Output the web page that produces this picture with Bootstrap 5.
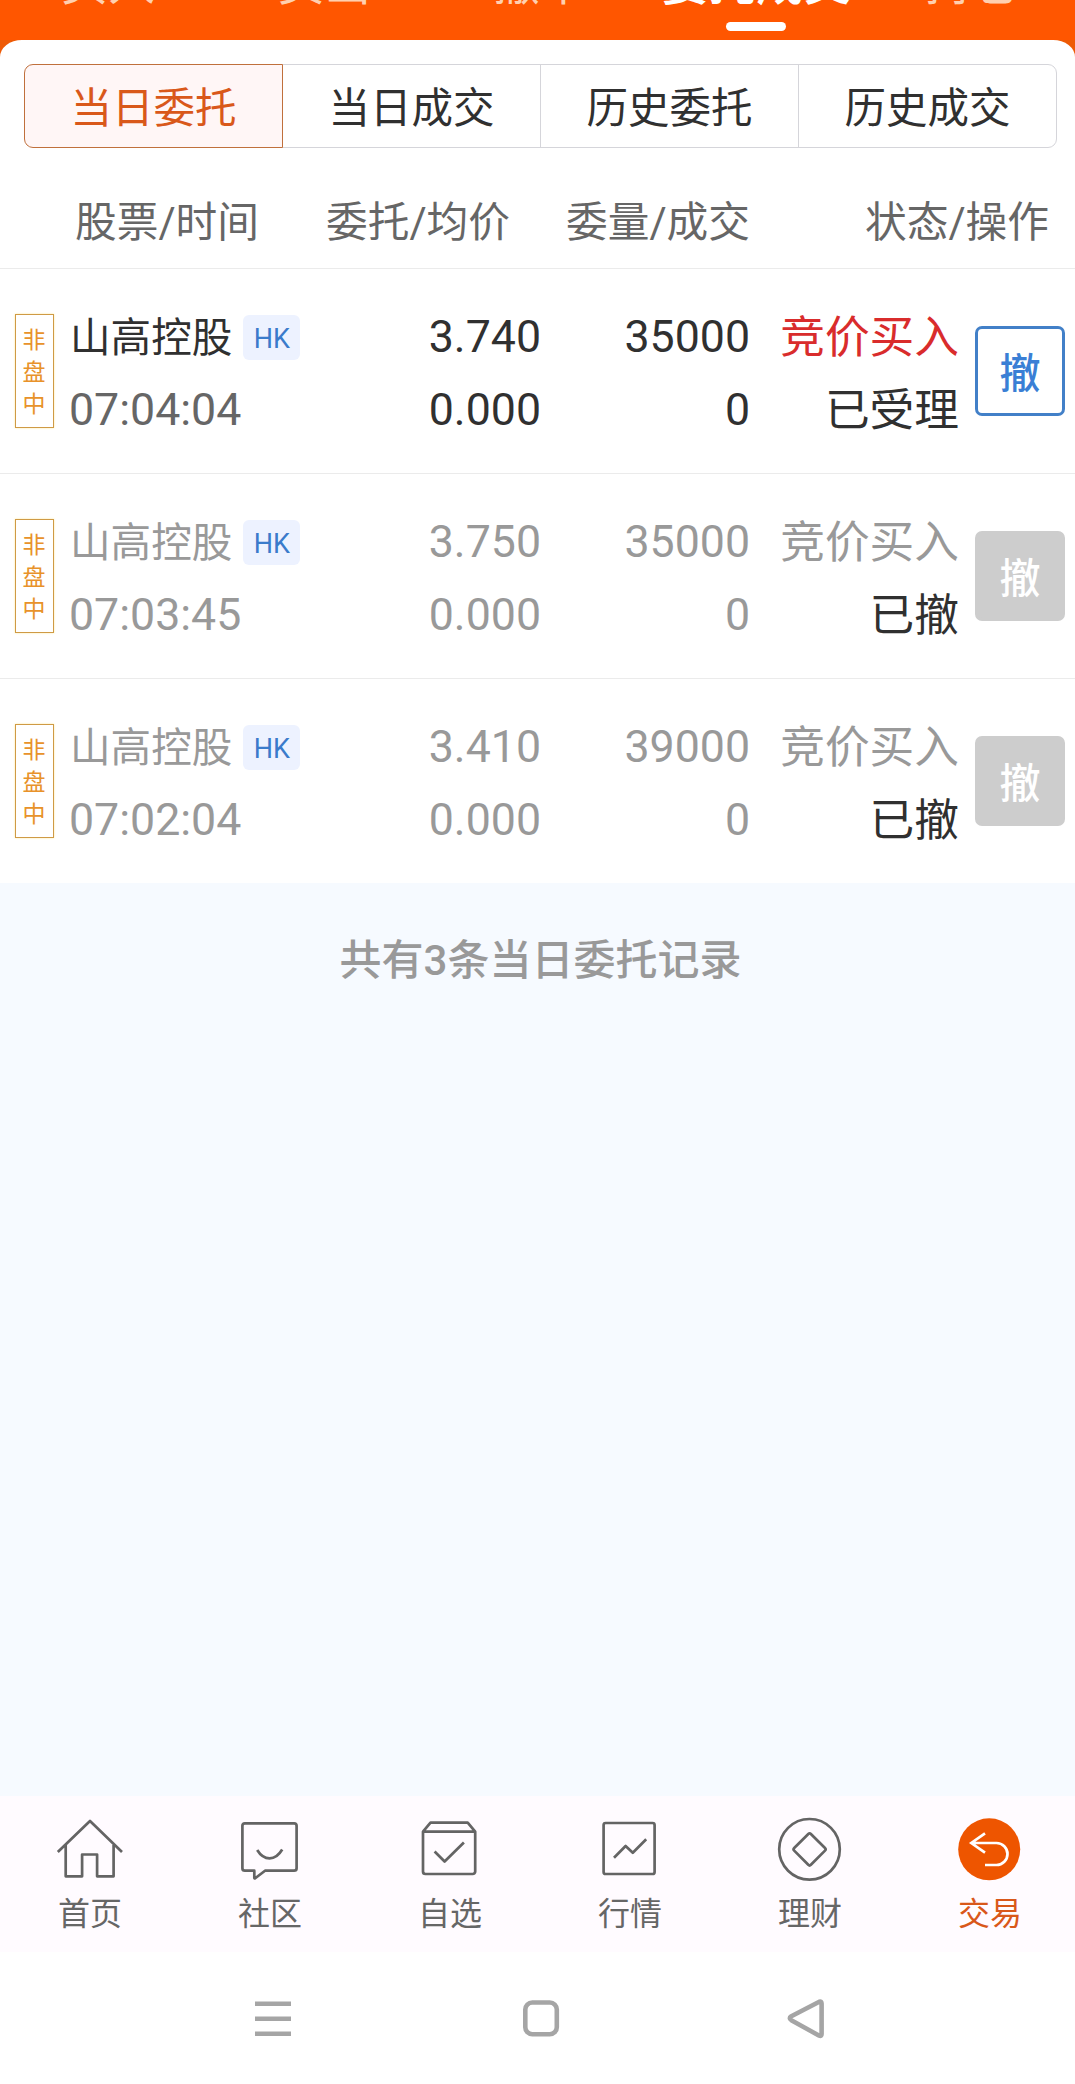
<!DOCTYPE html>
<html lang="zh-CN">
<head>
<meta charset="utf-8">
<meta name="viewport" content="width=device-width, initial-scale=1">
<title>当日委托</title>
<link href="https://cdn.jsdelivr.net/npm/bootstrap@5.3.0/dist/css/bootstrap.min.css" rel="stylesheet">
<style>
  body { font-family: Roboto, "Noto Sans CJK SC", sans-serif; color: #303030; background: #fff; width: 1075px; height: 2084px; overflow: hidden; }
  .topbar { height: 40px; background: #ff5600; overflow: hidden; }
  .toptabs { width: 1080px; }
  .toptabs .tt { width: 216px; height: 40px; color: #ffd0b0; font-size: 47px; line-height: 66px; white-space: nowrap; }
  .toptabs .tt span { margin-top: -49px; }
  .toptabs .tt.on { color: #fff; font-weight: 500; font-size: 47.5px; }
  .toptabs .tt.on i { width: 60px; height: 9px; border-radius: 5px; background: #fff; margin-top: 5px; }
  .sheet-back { background: #ee5a05; }
  .sheet { background: #fff; border-radius: 22px 22px 0 0 / 17px 17px 0 0; padding: 24px 19px 24px 24px; }
  .seg .btn { --bs-btn-border-color: #d5d5da; --bs-btn-color: #303030; --bs-btn-border-radius: 9px; height: 84px; width: 259px; flex: 0 0 259px; padding: 0; font-size: 41.5px; line-height: 87px; }
  .seg .btn.active { --bs-btn-active-bg: #fff6f6; --bs-btn-active-color: #d9581a; --bs-btn-active-border-color: #c0703c; }
  .thead-row { height: 97px; font-size: 41.7px; line-height: 101px; color: #666; border-bottom: 1px solid #ebebeb; }
  .h-stock { width: 259px; }
  .h-price { width: 251px; }
  .h-qty { width: 240px; }
  .h-state { width: 299px; }
  .order { height: 205px; border-bottom: 1px solid #ebebeb; font-size: 44.7px; line-height: 73px; padding-left: 15px; }
  .order:last-child { border-bottom: 0; height: 204px; }
  .slot { width: 39px; height: 114px; border: 1px solid #cf9a45; color: #e8922a; font-size: 23px; line-height: 32px; padding-top: 10px; margin-top: 45px; box-shadow: 0 0 2px #ffeaa0; }
  .slot span { margin-left: -1px; }
  .lines { margin-top: 32px; white-space: nowrap; }
  .c-name { width: 247px; margin-left: 15px; }
  .sname { font-size: 40.6px; line-height: 71px; padding: 2px 0 0 1px; }
  .hk { width: 57px; height: 45px; border-radius: 6px; background: #edf2ff; color: #3a7bcb; font-size: 27px; line-height: 48px; margin: 0 0 0 11px; }
  .c-price { width: 225px; }
  .c-qty { width: 209px; }
  .c-state { width: 209px; }
  .zh { height: 73px; padding-top: 1px; }
  .time { color: #666; }
  .buy { color: #d92c2c; }
  .off, .off .time { color: #999; }
  .off .final { color: #303030; }
  .off .buy { color: #999; }
  .undo { width: 90px; height: 90px; margin: 57px 0 0 16px; padding: 0; border: 3px solid #4280c8; border-radius: 7px; color: #3a7fd5; font-size: 41px; font-weight: 500; line-height: 90px; background: #fff; }
  .off .undo { background: #cdcdcd; border-color: #cdcdcd; color: #fff; }
  .rest { height: 913px; background: #f6faff; padding: 48px 0 0 6px; font-size: 42px; line-height: 60px; color: #999; font-weight: 500; }
  .tabbar { height: 156px; background: #fffbff; overflow: hidden; }
  .tabbar-in { width: 1080px; }
  .tabbar a { width: 180px; padding-top: 18px; color: #666; font-size: 32px; line-height: 44px; text-decoration: none; }
  .tabbar a.on { color: #d9581a; }
  .tabbar svg { width: 72px; height: 72px; margin-bottom: 6px; }
  .line-ico { fill: none; stroke: #646464; stroke-width: 2.7; stroke-linejoin: round; }
  .sys { height: 132px; padding: 46px 0 0 253px; gap: 226px; }
  .sys svg { width: 40px; height: 42px; fill: none; stroke: #a5a5a5; stroke-width: 4.6; overflow: visible; stroke-linejoin: round; }
</style>
<script src="https://cdn.jsdelivr.net/npm/bootstrap@5.3.0/dist/js/bootstrap.bundle.min.js"></script>
</head>
<body class="d-flex flex-column">
<header class="topbar flex-shrink-0">
  <div class="toptabs d-flex">
    <div class="tt d-flex flex-column align-items-center"><span>买入</span></div>
    <div class="tt d-flex flex-column align-items-center"><span>卖出</span></div>
    <div class="tt d-flex flex-column align-items-center"><span>撤单</span></div>
    <div class="tt on d-flex flex-column align-items-center"><span>委托成交</span><i></i></div>
    <div class="tt d-flex flex-column align-items-center"><span>持仓</span></div>
  </div>
</header>
<div class="sheet-back">
  <div class="sheet">
    <div class="btn-group seg d-flex" role="group">
      <button class="btn active">当日委托</button>
      <button class="btn">当日成交</button>
      <button class="btn">历史委托</button>
      <button class="btn">历史成交</button>
    </div>
  </div>
</div>
<main class="flex-shrink-0">
  <div class="thead-row d-flex text-end text-nowrap">
    <div class="h-stock">股票/时间</div>
    <div class="h-price">委托/均价</div>
    <div class="h-qty">委量/成交</div>
    <div class="h-state">状态/操作</div>
  </div>
  <div>
    <div class="order d-flex">
      <div class="slot text-center"><span>非</span><br><span>盘</span><br><span>中</span></div>
      <div class="lines c-name"><div class="d-flex align-items-center"><span class="sname">山高控股</span><span class="hk text-center">HK</span></div><div class="time">07:04:04</div></div>
      <div class="lines c-price text-end"><div>3.740</div><div>0.000</div></div>
      <div class="lines c-qty text-end"><div>35000</div><div>0</div></div>
      <div class="lines c-state text-end"><div class="zh buy">竞价买入</div><div class="zh final">已受理</div></div>
      <button class="btn undo">撤</button>
    </div>
    <div class="order off d-flex">
      <div class="slot text-center"><span>非</span><br><span>盘</span><br><span>中</span></div>
      <div class="lines c-name"><div class="d-flex align-items-center"><span class="sname">山高控股</span><span class="hk text-center">HK</span></div><div class="time">07:03:45</div></div>
      <div class="lines c-price text-end"><div>3.750</div><div>0.000</div></div>
      <div class="lines c-qty text-end"><div>35000</div><div>0</div></div>
      <div class="lines c-state text-end"><div class="zh buy">竞价买入</div><div class="zh final">已撤</div></div>
      <button class="btn undo">撤</button>
    </div>
    <div class="order off d-flex">
      <div class="slot text-center"><span>非</span><br><span>盘</span><br><span>中</span></div>
      <div class="lines c-name"><div class="d-flex align-items-center"><span class="sname">山高控股</span><span class="hk text-center">HK</span></div><div class="time">07:02:04</div></div>
      <div class="lines c-price text-end"><div>3.410</div><div>0.000</div></div>
      <div class="lines c-qty text-end"><div>39000</div><div>0</div></div>
      <div class="lines c-state text-end"><div class="zh buy">竞价买入</div><div class="zh final">已撤</div></div>
      <button class="btn undo">撤</button>
    </div>
  </div>
  <div class="rest text-center">共有3条当日委托记录</div>
</main>
<nav class="tabbar flex-shrink-0">
  <div class="tabbar-in d-flex">
    <a href="#" class="d-flex flex-column align-items-center">
      <svg class="line-ico" viewBox="0 0 72 72"><path d="M3.800 38 36 7l32 31M11.700 31v31.300h16.400V40.500h15v21.800h16.500V31"/></svg>首页</a>
    <a href="#" class="d-flex flex-column align-items-center">
      <svg class="line-ico" viewBox="0 0 72 72"><path d="M10.900 9.300h49.200a2.500 2.500 0 0 1 2.500 2.500v42.400a2.500 2.500 0 0 1-2.500 2.500H31l-9.800 7.600q-.9.400-.9-.6v-7h-9.400a2.500 2.500 0 0 1-2.500-2.500V11.800a2.500 2.500 0 0 1 2.500-2.500zM23.200 36q5 8.300 12.400 8.300T48.200 35.500"/></svg>社区</a>
    <a href="#" class="d-flex flex-column align-items-center">
      <svg class="line-ico" viewBox="0 0 72 72"><path d="M9 17.700 16.500 8.700h37.200l7.500 9V57.500a2.500 2.500 0 0 1-2.500 2.500H11.500A2.500 2.500 0 0 1 9 57.500zH61.200M20.600 37.500l10 10 19.300-19"/></svg>自选</a>
    <a href="#" class="d-flex flex-column align-items-center">
      <svg class="line-ico" viewBox="0 0 72 72"><rect x="9.600" y="9" width="51" height="51" rx="2"/><path d="M20 43.700 31.600 32l7.200 6.800L52.200 25.300"/></svg>行情</a>
    <a href="#" class="d-flex flex-column align-items-center">
      <svg class="line-ico" viewBox="0 0 72 72"><circle cx="35.500" cy="35.300" r="30.300"/><path d="M34.300 20q1.300-1.300 2.600 0L51 34q1.300 1.300 0 2.600L36.900 50.800q-1.300 1.300-2.600 0L20.200 36.600q-1.300-1.300 0-2.600z"/></svg>理财</a>
    <a href="#" class="on d-flex flex-column align-items-center">
      <svg viewBox="0 0 72 72" fill="none"><circle cx="35.200" cy="35.300" r="31" fill="#ee5500"/><path d="M31 19.300 17.300 29 31 38.700M17.300 29h25.200a11 11 0 0 1 0 22H31" stroke="#fff" stroke-width="2.700"/></svg>交易</a>
  </div>
</nav>
<div class="sys d-flex flex-shrink-0">
  <svg viewBox="0 0 40 42"><path d="M2 5.700h36M2 20.700h36M2 35.700h36"/></svg>
  <svg viewBox="0 0 40 42"><rect x="6.300" y="4.500" width="31.500" height="31.700" rx="7"/></svg>
  <svg viewBox="0 0 40 42"><path d="M34.300 3.700 6.300 18.200q-3 2 0 4L34.300 37.700q2.300.8 2.300-1.800V5.500q0-2.600-2.300-1.800z"/></svg>
</div>
</body>
</html>
